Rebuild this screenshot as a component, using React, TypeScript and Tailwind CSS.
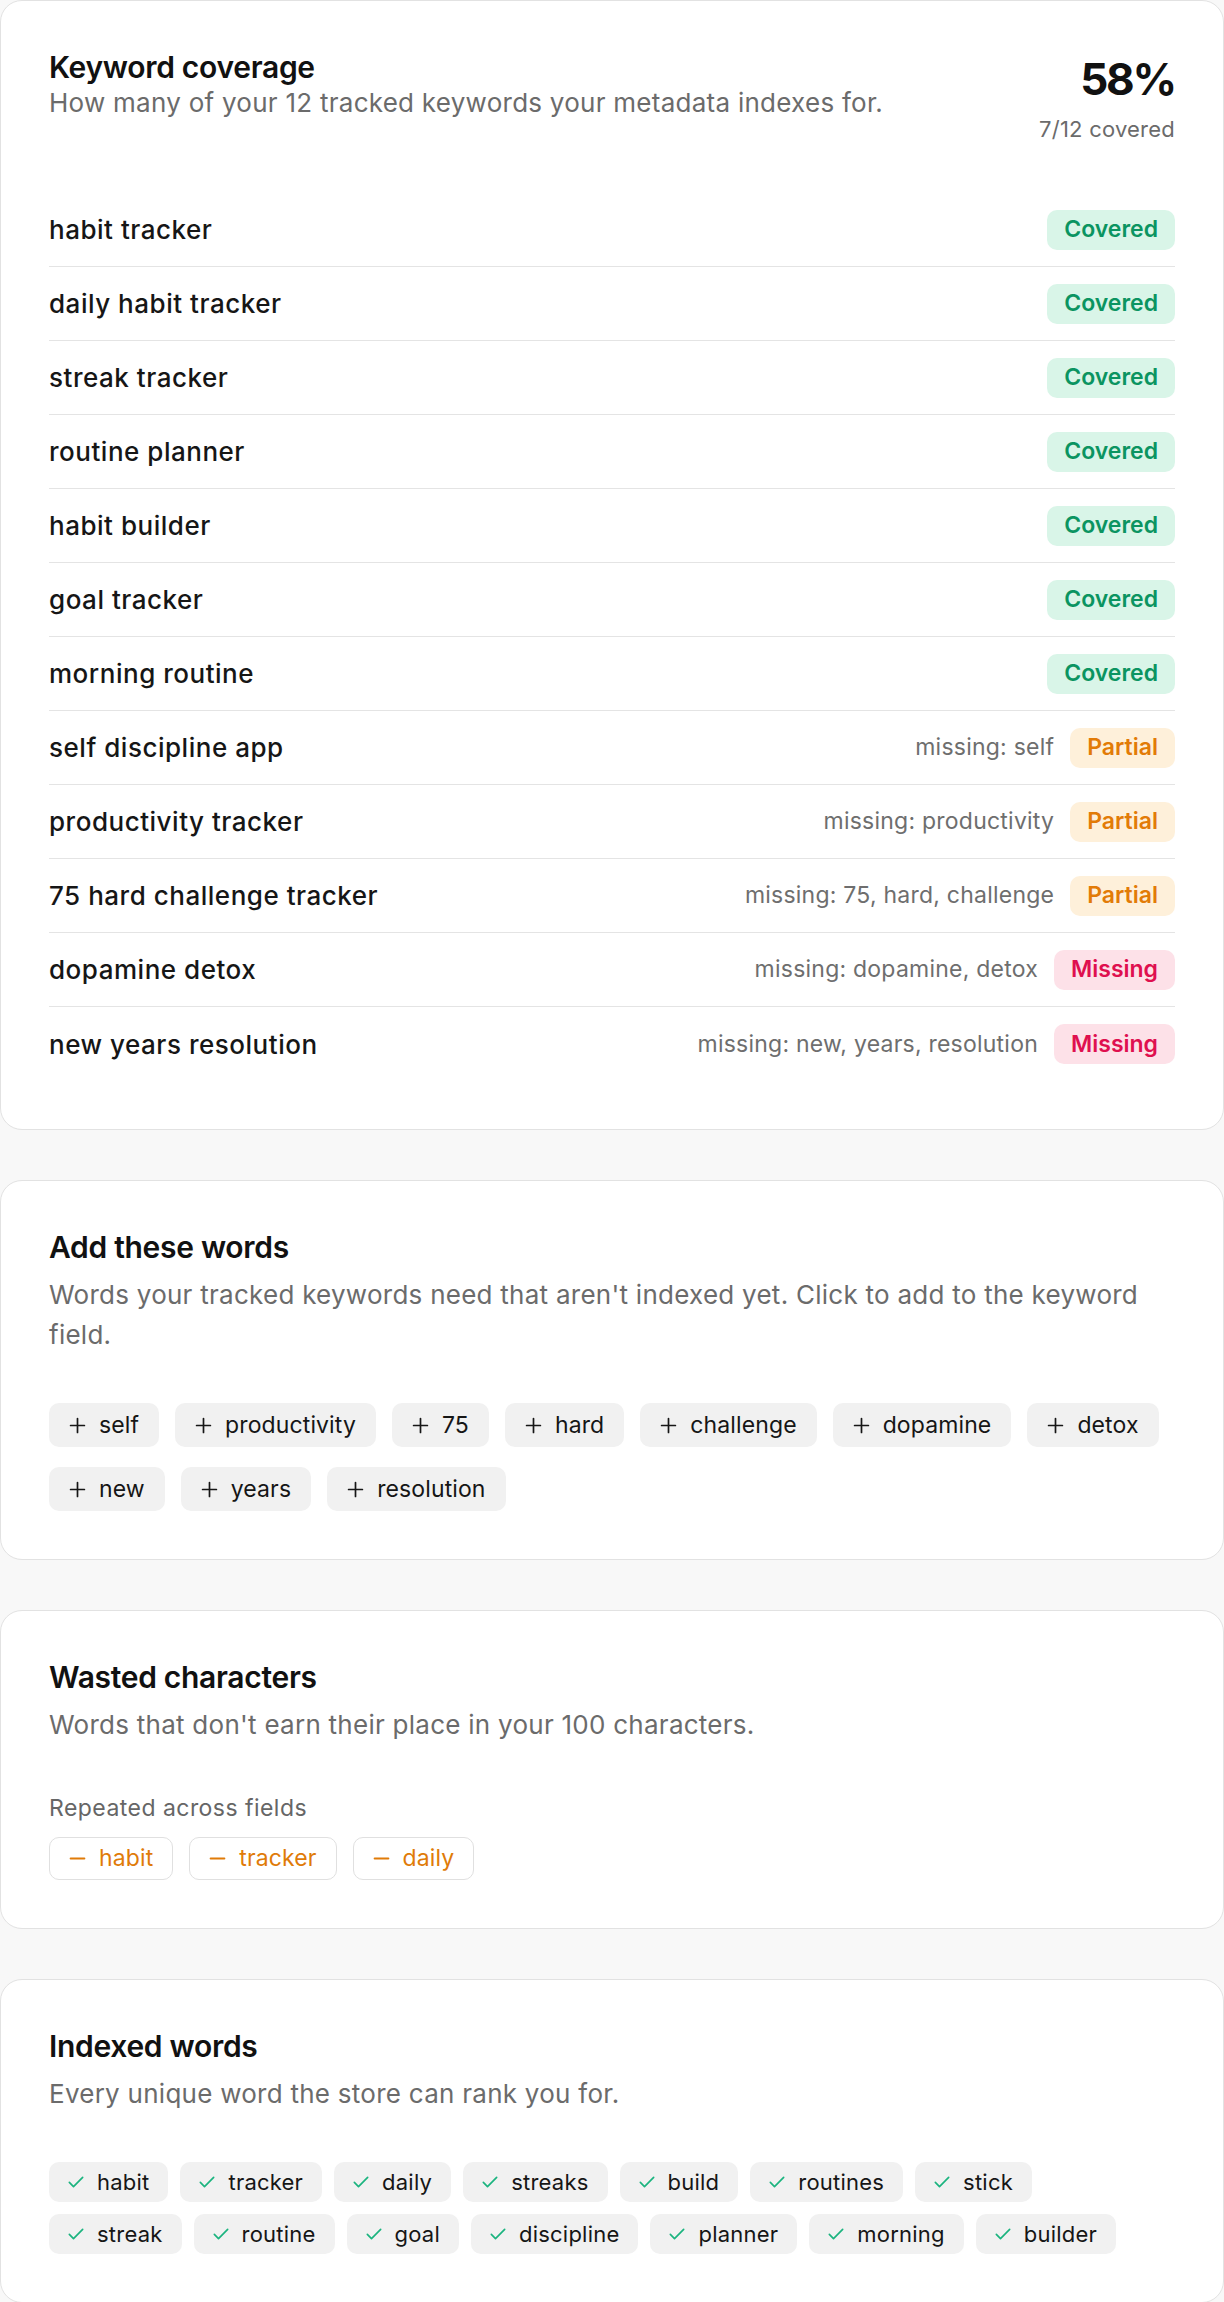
import React from 'react';

type Status = 'covered' | 'partial' | 'missing';

interface KeywordRow {
  keyword: string;
  status: Status;
  missing?: string[];
}

const KEYWORDS: KeywordRow[] = [
  { keyword: 'habit tracker', status: 'covered' },
  { keyword: 'daily habit tracker', status: 'covered' },
  { keyword: 'streak tracker', status: 'covered' },
  { keyword: 'routine planner', status: 'covered' },
  { keyword: 'habit builder', status: 'covered' },
  { keyword: 'goal tracker', status: 'covered' },
  { keyword: 'morning routine', status: 'covered' },
  { keyword: 'self discipline app', status: 'partial', missing: ['self'] },
  { keyword: 'productivity tracker', status: 'partial', missing: ['productivity'] },
  { keyword: '75 hard challenge tracker', status: 'partial', missing: ['75', 'hard', 'challenge'] },
  { keyword: 'dopamine detox', status: 'missing', missing: ['dopamine', 'detox'] },
  { keyword: 'new years resolution', status: 'missing', missing: ['new', 'years', 'resolution'] },
];

const SUGGESTED = ['self', 'productivity', '75', 'hard', 'challenge', 'dopamine', 'detox', 'new', 'years', 'resolution'];
const REPEATED = ['habit', 'tracker', 'daily'];
const INDEXED = [
  'habit', 'tracker', 'daily', 'streaks', 'build', 'routines', 'stick',
  'streak', 'routine', 'goal', 'discipline', 'planner', 'morning', 'builder',
];

const BADGE: Record<Status, { label: string; className: string }> = {
  covered: { label: 'Covered', className: 'bg-[#d9f5e8] text-[#0b9461]' },
  partial: { label: 'Partial', className: 'bg-[#fef0da] text-[#e27b07]' },
  missing: { label: 'Missing', className: 'bg-[#fde1e8] text-[#df104f]' },
};

const Card: React.FC<{ children: React.ReactNode }> = ({ children }) => (
  <section className="rounded-[22px] border border-[#e2e2e2] bg-white p-12">{children}</section>
);

const CardTitle: React.FC<{ children: React.ReactNode }> = ({ children }) => (
  <h2 className="text-[30px] leading-[36px] font-semibold tracking-[-0.01em] text-[#111111]">{children}</h2>
);

const CardSub: React.FC<{ children: React.ReactNode }> = ({ children }) => (
  <p className="mt-[10px] text-[26px] leading-[40px] tracking-[0.01em] text-[#6b6b6b]">{children}</p>
);

const CheckIcon = () => (
  <svg className="h-[20px] w-[20px] shrink-0 text-[#1bb47f]" viewBox="0 0 24 24" fill="none" stroke="currentColor" strokeWidth={2} strokeLinecap="round" strokeLinejoin="round">
    <path d="M4 12.5l5 5L20 6.5" />
  </svg>
);

const PlusIcon = () => (
  <svg className="h-[17px] w-[17px] shrink-0" viewBox="0 0 16 16" fill="none" stroke="currentColor" strokeWidth={1.6} strokeLinecap="round">
    <path d="M8 1.5v13M1.5 8h13" />
  </svg>
);

const MinusIcon = () => (
  <svg className="h-[17px] w-[17px] shrink-0" viewBox="0 0 16 16" fill="none" stroke="currentColor" strokeWidth={1.8} strokeLinecap="round">
    <path d="M1.5 8h13" />
  </svg>
);

export default function App() {
  const covered = KEYWORDS.filter((k) => k.status === 'covered').length;
  const pct = Math.round((covered / KEYWORDS.length) * 100);

  return (
    <div className="min-h-screen bg-[#f8f8f8] font-['Inter','Noto_Sans',sans-serif] text-[#111111]">
      <div className="flex flex-col gap-[50px]">
        {/* coverage */}
        <Card>
          <div className="flex items-start justify-between gap-6">
            <div>
              <CardTitle>Keyword coverage</CardTitle>
              <p className="text-[26px] leading-[36px] tracking-[0.01em] text-[#6b6b6b]">
                How many of your {KEYWORDS.length} tracked keywords your metadata indexes for.
              </p>
            </div>
            <div className="flex h-[96px] flex-col items-end">
              <div className="text-[44px] leading-[60px] font-bold tracking-[-0.05em] text-[#111111]">{pct}%</div>
              <div className="mt-[4px] text-[22px] leading-[32px] tracking-[0.01em] text-[#6b6b6b]">
                {covered}/{KEYWORDS.length} covered
              </div>
            </div>
          </div>

          <div className="mt-12">
            {KEYWORDS.map((row, i) => (
              <div
                key={row.keyword}
                className={`flex h-[74px] items-center justify-between ${i < KEYWORDS.length - 1 ? 'border-b border-[#e4e4e4]' : ''}`}
              >
                <span className="text-[26px] font-medium tracking-[0.02em] text-[#161616]">{row.keyword}</span>
                <div className="flex items-center gap-4">
                  {row.missing && (
                    <span className="text-[23px] tracking-[0.01em] text-[#6e6e6e]">missing: {row.missing.join(', ')}</span>
                  )}
                  <span className={`flex h-[40px] items-center rounded-[10px] px-[17px] text-[23px] font-semibold ${BADGE[row.status].className}`}>
                    {BADGE[row.status].label}
                  </span>
                </div>
              </div>
            ))}
          </div>
        </Card>

        {/* suggestions */}
        <Card>
          <CardTitle>Add these words</CardTitle>
          <CardSub>Words your tracked keywords need that aren't indexed yet. Click to add to the keyword field.</CardSub>
          <div className="mt-12 flex flex-wrap gap-x-4 gap-y-5">
            {SUGGESTED.map((w) => (
              <button
                key={w}
                className="flex h-[44px] items-center gap-[13px] rounded-[10px] bg-[#f1f1f1] px-[20px] text-[23px] tracking-[0.005em] text-[#161616]"
              >
                <PlusIcon />
                {w}
              </button>
            ))}
          </div>
        </Card>

        {/* wasted */}
        <Card>
          <CardTitle>Wasted characters</CardTitle>
          <CardSub>Words that don't earn their place in your 100 characters.</CardSub>
          <div className="mt-12 text-[23px] leading-[30px] tracking-[0.02em] text-[#666666]">Repeated across fields</div>
          <div className="mt-[14px] flex flex-wrap gap-4">
            {REPEATED.map((w) => (
              <span
                key={w}
                className="flex h-[43px] items-center gap-[13px] rounded-[10px] border-[1.5px] border-[#e0e0e0] bg-white px-[19px] text-[23px] tracking-[0.005em] text-[#e07b08]"
              >
                <MinusIcon />
                {w}
              </span>
            ))}
          </div>
        </Card>

        {/* indexed */}
        <Card>
          <CardTitle>Indexed words</CardTitle>
          <CardSub>Every unique word the store can rank you for.</CardSub>
          <div className="mt-12 flex flex-wrap gap-3">
            {INDEXED.map((w) => (
              <span key={w} className="flex h-[40px] items-center gap-[11px] rounded-[10px] bg-[#f1f1f1] pl-[17px] pr-[19px] text-[22px] tracking-[0.01em] text-[#161616]">
                <CheckIcon />
                {w}
              </span>
            ))}
          </div>
        </Card>
      </div>
    </div>
  );
}
